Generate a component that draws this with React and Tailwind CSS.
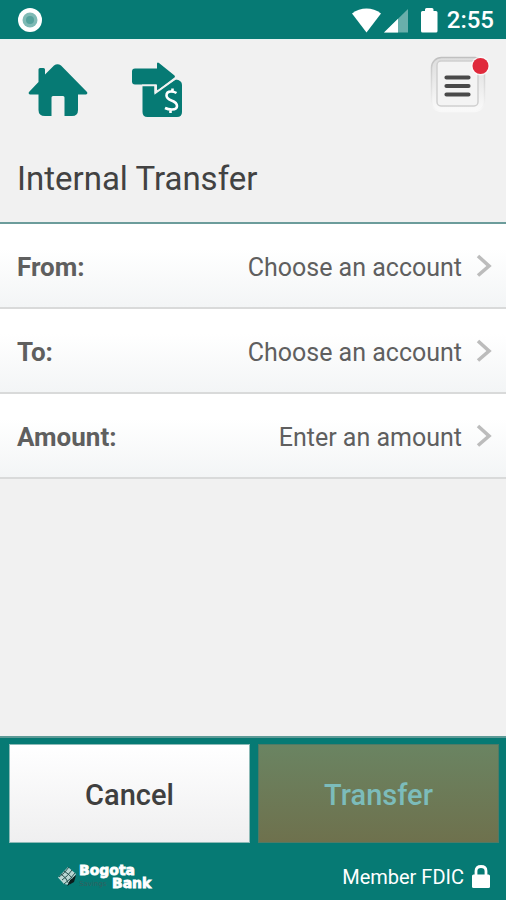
import React from 'react';

const FIELDS = [
  { label: 'From:', value: 'Choose an account' },
  { label: 'To:', value: 'Choose an account' },
  { label: 'Amount:', value: 'Enter an amount' },
];

function StatusBar() {
  return (
    <div className="flex h-[39px] items-center justify-between bg-[#067a74] pl-[18px] pr-3 pt-px text-white">
      <svg width="24" height="24" viewBox="0 0 24 24" aria-hidden="true">
        <circle cx="12" cy="12" r="12" fill="#fff" />
        <circle cx="12" cy="12" r="7.5" fill="#7fbab5" />
        <circle cx="12" cy="12" r="4" fill="#55a29c" />
      </svg>
      <div className="flex items-center">
        <svg width="86" height="25" viewBox="0 0 86 25" aria-hidden="true">
          <path d="M0 5.5C8.5 -1.2 20.5 -1.2 29 5.5L14.5 24.5Z" fill="#fff" />
          <path d="M56 1V24.5H32Z" fill="#fff" fillOpacity="0.4" />
          <path d="M46 10.8V24.5H32Z" fill="#fff" />
          <path
            d="M73 3V1.5Q73 0 74.5 0H80Q81.5 0 81.5 1.5V3H84Q85.5 3 85.5 4.5V23Q85.5 24.5 84 24.5H70.5Q69 24.5 69 23V4.5Q69 3 70.5 3Z"
            fill="#fff"
          />
        </svg>
        <span className="ml-[9px] text-2xl font-medium">2:55</span>
      </div>
    </div>
  );
}

function HomeIcon() {
  return (
    <svg width="60" height="52" viewBox="0 0 60 52" fill="#067a74" aria-hidden="true">
      <path d="M26 1.5Q29.5 -1 33 1.5L59 28Q60 30 58 30.5H50V46Q50 52 44 52H36.5V33.5Q36.5 32 35 32H25Q23.5 32 23.5 33.5V52H17Q10.5 52 10.5 46V30.5H2Q0 30 1 28L10.5 18V5.5Q10.5 4 12 4H15.5Q17 4 17 5.5V10.5Z" />
    </svg>
  );
}

function TransferIcon() {
  return (
    <svg width="50" height="55" viewBox="0 0 50 55" aria-hidden="true">
      <path
        d="M10.5 24H22.5V31.5L43.5 17.5Q50 18 50 23V50Q50 55 45 55H15.5Q10.5 55 10.5 50Z"
        fill="#067a74"
      />
      <path
        d="M3 6.5H25V1.5Q25.5 0 27 1L42.5 13.5Q43.5 14.5 42.5 15.5L26 28Q25 28.5 25 27V22.5H3Q0 22.5 0 19.5V9.5Q0 6.5 3 6.5Z"
        fill="#067a74"
      />
      <path d="M10 23.3H23.3V31L44 16.3" fill="none" stroke="#f1f1f1" strokeWidth="1.7" />
      <path
        d="M44.5 31Q42 29.5 39 29.5Q34.5 29.5 34.5 33.5Q34.5 36.5 39.5 38.5Q45 40.5 45 44Q45 47.5 40 47.5Q36 47.5 33 46M40.5 26.5V30M38.5 47V51"
        fill="none"
        stroke="#fff"
        strokeWidth="2.6"
      />
    </svg>
  );
}

function MenuIcon() {
  return (
    <svg width="60" height="58" viewBox="0 0 60 58" aria-hidden="true">
      <defs>
        <linearGradient id="bezel" x1="0" y1="0" x2="0" y2="1">
          <stop offset="0" stopColor="#dedede" />
          <stop offset="0.5" stopColor="#ececec" />
          <stop offset="1" stopColor="#fafafa" />
        </linearGradient>
        <linearGradient id="bezelEdge" x1="0" y1="0" x2="0" y2="1">
          <stop offset="0" stopColor="#c0c0c0" />
          <stop offset="1" stopColor="#f8f8f8" />
        </linearGradient>
      </defs>
      <rect x="1.5" y="1.5" width="53" height="54" rx="10" fill="url(#bezel)" stroke="url(#bezelEdge)" strokeWidth="1.5" />
      <rect x="7" y="5" width="41" height="45" rx="4" fill="#f4f4f4" stroke="#cfcfcf" strokeWidth="1.5" />
      <path d="M16.5 21.5H38.500M16.5 30H38.500M16.5 38.500H38.500" stroke="#4a4a4a" strokeWidth="4.200" strokeLinecap="round" />
      <circle cx="50.5" cy="10" r="9.5" fill="#fff" fillOpacity="0.7" />
      <circle cx="50.5" cy="10" r="8" fill="#e02a3c" />
    </svg>
  );
}

function Chevron() {
  return (
    <svg width="16" height="24" viewBox="0 0 16 24" className="mb-1 ml-[14px] shrink-0" aria-hidden="true">
      <path d="M2 2L13 12L2 21.5" fill="none" stroke="#bcbcbc" strokeWidth="3.6" />
    </svg>
  );
}

function BankLogo() {
  return (
    <svg width="100" height="30" viewBox="0 -3 100 30" role="img" aria-label="Bogota Savings Bank">
      <path d="M0 12.5L10 2L18 9L11 20L6 19Z" fill="#b9d6d3" />
      <path d="M18 10L16 17L9 21L12 15Z" fill="#0b1c1c" />
      <path d="M1 12Q7 8 11 2M4 15Q10 11 14 5M6 19Q13 14 17 8M3 9Q8 12 11 19M6 6Q11 9 15 14" fill="none" stroke="#24504d" strokeWidth="1" />
      <g fontFamily="'DejaVu Sans', sans-serif" fontWeight="700">
        <text x="21" y="10" fontSize="14" fill="#fff" stroke="#fff" strokeWidth="0.8">Bogota</text>
        <text x="21" y="21" fontSize="7" fontWeight="400" fill="#34605f">Savings</text>
        <text x="54" y="23" fontSize="14" fill="#fff" stroke="#fff" strokeWidth="0.8">Bank</text>
      </g>
    </svg>
  );
}

export default function App() {
  return (
    <div className="flex min-h-screen flex-col bg-[#f1f1f1] font-['Roboto',sans-serif]">
      <StatusBar />
      <header className="border-b-2 border-[#6c9c9b] border-t border-t-[#e8f3f2]">
        <div className="flex items-start justify-between pl-7 pr-4 pt-4">
          <nav className="flex items-start gap-11 pt-[6px]">
            <a href="#home" aria-label="Home" className="pt-[2px]">
              <HomeIcon />
            </a>
            <a href="#transfers" aria-label="Transfers">
              <TransferIcon />
            </a>
          </nav>
          <button type="button" aria-label="Menu">
            <MenuIcon />
          </button>
        </div>
        <h1 className="px-[17px] pb-[23px] pt-[42px] text-[33px] leading-10 text-[#424242]">Internal Transfer</h1>
      </header>

      <main className="flex-1">
        {FIELDS.map((field) => (
          <button
            key={field.label}
            type="button"
            className="flex h-[85px] w-full items-center border-b-2 border-[#d9dada] bg-linear-to-b from-white from-30% to-[#f3f5f6] pl-[17px] pr-[14px] pt-1 text-[25px] text-[#5f5f5f]"
          >
            <span className="text-[26px] font-bold">{field.label}</span>
            <span className="ml-auto">{field.value}</span>
            <Chevron />
          </button>
        ))}
      </main>

      <footer className="border-t-2 border-[#5d9a97] bg-[#067a74]">
        <div className="grid grid-cols-2 gap-2 pl-[9px] pr-[7px] pt-[6px] text-[29px] font-medium">
          <button
            type="button"
            className="h-[99px] border border-[#8dbab7] bg-linear-to-b from-white to-[#efeff0] pt-1 text-[#3f3f3f]"
          >
            Cancel
          </button>
          <button
            type="button"
            disabled
            className="h-[99px] border border-[#4f7a66] bg-linear-to-b from-[#6a8462] to-[#6e714d] pt-1 text-[#7cbcbb]"
          >
            Transfer
          </button>
        </div>
        <div className="flex h-[57px] items-center justify-between pl-[58px] pr-4 pt-[10px]">
          <BankLogo />
          <div className="flex items-center gap-2 text-xl text-white">
            <span>Member FDIC</span>
            <svg width="18" height="23" viewBox="0 0 18 23" aria-hidden="true">
              <path d="M4 11V6Q4 1.5 9 1.5Q14 1.5 14 6V11" fill="none" stroke="#fff" strokeWidth="2.8" />
              <rect x="0" y="9.5" width="18" height="13.5" rx="1.5" fill="#fff" />
            </svg>
          </div>
        </div>
      </footer>
    </div>
  );
}
